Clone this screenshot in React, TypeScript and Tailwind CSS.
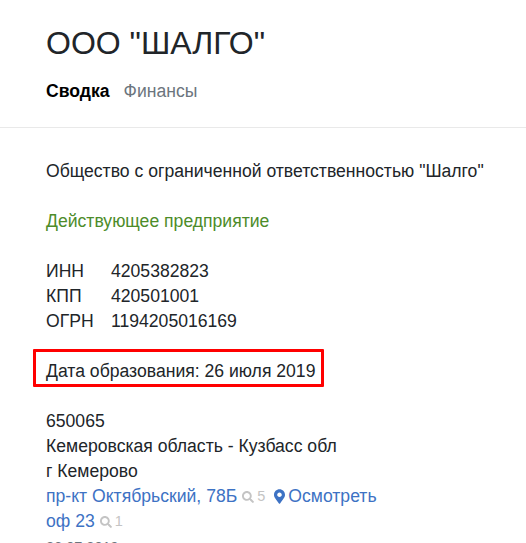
function Hits({ n }: { n: number }) {
  return (
    <span className="inline-flex items-center text-[14.5px] text-[#c4c4c4] ml-[5px]">
      <svg viewBox="0 0 512 512" className="w-[12px] h-[12px] mr-[3px] mt-[1px]" fill="currentColor">
        <path d="M505 442.7 405.3 343c-4.5-4.5-10.6-7-17-7H372c27.6-35.3 44-79.7 44-128C416 93.1 322.9 0 208 0S0 93.1 0 208s93.1 208 208 208c48.3 0 92.7-16.4 128-44v16.3c0 6.4 2.5 12.5 7 17l99.7 99.7c9.4 9.4 24.6 9.4 33.9 0l28.3-28.3c9.4-9.4 9.4-24.6.1-34zM208 336c-70.7 0-128-57.2-128-128 0-70.7 57.2-128 128-128 70.7 0 128 57.2 128 128 0 70.7-57.2 128-128 128z" />
      </svg>
      {n}
    </span>
  );
}

export default function App() {
  return (
    <div className="h-[543px] overflow-hidden bg-white text-[17.6px] leading-[25px] text-[#212529] font-['Liberation_Sans',Arial,sans-serif]">
      <div className="h-[128px] border-b border-[#e9e9e9] pl-[46px] pt-[22px]">
        <h1 className="text-[32px] leading-[43px]">ООО "ШАЛГО"</h1>
        <div className="mt-[14px] flex gap-[14px]">
          <span className="font-bold text-black">Сводка</span>
          <span className="text-[#6c757d]">Финансы</span>
        </div>
      </div>

      <div className="pl-[46px] pt-[31px]">
        <div>Общество с ограниченной ответственностью "Шалго"</div>
        <div className="mt-[25px] text-[#4d8c2a]">Действующее предприятие</div>

        <div className="mt-[25px] grid grid-cols-[65px_1fr]">
          <span>ИНН</span><span>4205382823</span>
          <span>КПП</span><span>420501001</span>
          <span>ОГРН</span><span>1194205016169</span>
        </div>

        <div className="relative mt-[25px]">
          Дата образования: 26 июля 2019
          <div className="absolute left-[-13px] top-[-10px] h-[38px] w-[291px] border-[3px] border-[#ff0000] rounded-[1px]" />
        </div>

        <div className="mt-[25px]">
          <div>650065</div>
          <div>Кемеровская область - Кузбасс обл</div>
          <div>г Кемерово</div>
          <div className="flex items-center text-[#3d72c4]">
            пр-кт Октябрьский, 78Б
            <Hits n={5} />
            <svg viewBox="0 0 384 512" className="w-[11px] h-[15px] ml-[9px] mr-[3px]" fill="currentColor">
              <path d="M172.3 501.7C27 291 0 273.6 0 192 0 86 86 0 192 0s192 86 192 192c0 81.6-27 99-172.3 309.7-9.5 13.8-29.9 13.8-39.4 0zM192 272c44.2 0 80-35.8 80-80s-35.8-80-80-80-80 35.8-80 80 35.8 80 80 80z" />
            </svg>
            Осмотреть
          </div>
          <div className="flex items-center text-[#3d72c4]">
            оф 23
            <Hits n={1} />
          </div>
          <div className="mt-[1px] text-[14.5px] text-[#6c757d]">26.07.2019</div>
        </div>
      </div>
    </div>
  );
}
